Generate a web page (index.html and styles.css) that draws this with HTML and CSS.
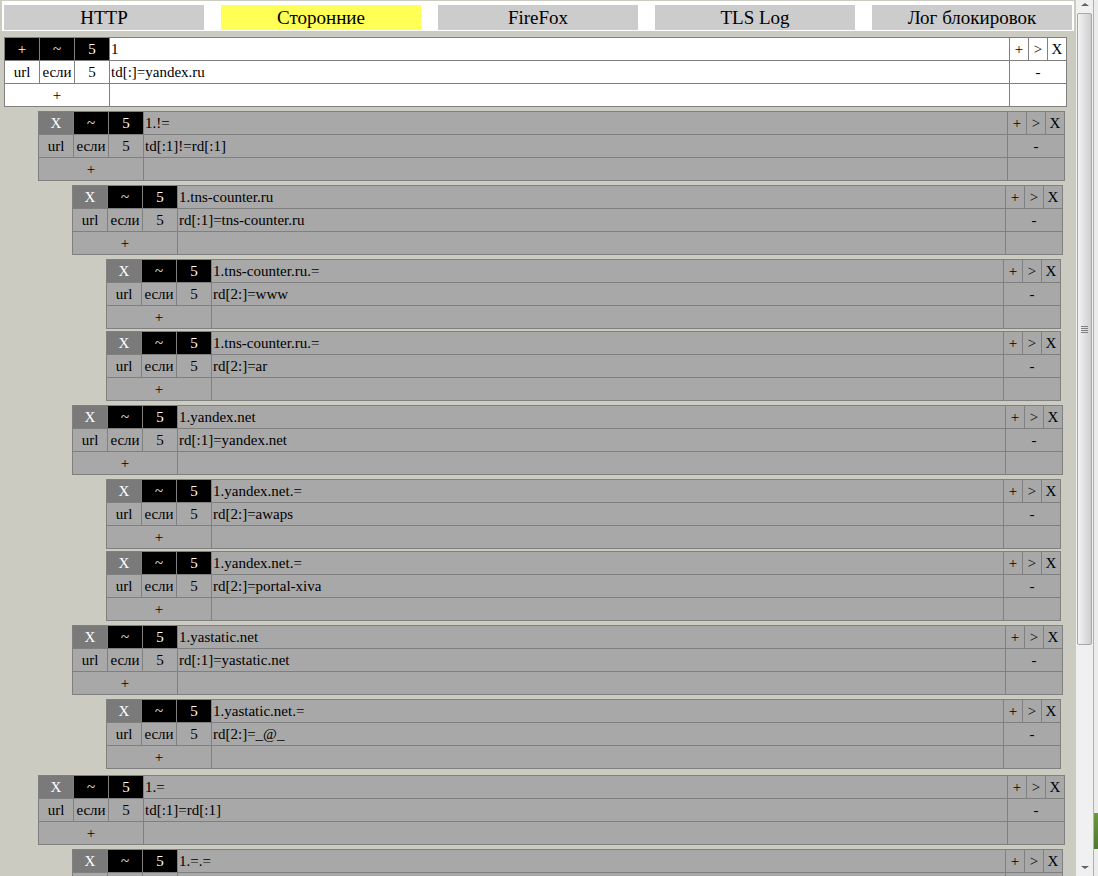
FILE: index.html
```html
<!DOCTYPE html>
<html lang="ru">
<head>
<meta charset="utf-8">
<title>Сторонние</title>
<link rel="stylesheet" href="styles.css">
</head>
<body>
<div class="page">
  <div class="tabs">
    <div class="tab">HTTP</div>
    <div class="tab active">Сторонние</div>
    <div class="tab">FireFox</div>
    <div class="tab">TLS Log</div>
    <div class="tab">Лог блокировок</div>
  </div>
  <div class="tree">
    <div class="node">
      <table class="blk white">
        <tr><td class="c k">+</td><td class="c k">~</td><td class="c k">5</td><td class="t">1</td><td class="r">+</td><td class="r">&gt;</td><td class="r">X</td></tr>
        <tr><td class="c">url</td><td class="c">если</td><td class="c">5</td><td class="t">td[:]=yandex.ru</td><td colspan="3">-</td></tr>
        <tr><td colspan="3">+</td><td class="t"></td><td colspan="3"></td></tr>
      </table>
      <div class="children">
        <div class="node">
          <table class="blk">
            <tr><td class="c x">X</td><td class="c k">~</td><td class="c k">5</td><td class="t">1.!=</td><td class="r">+</td><td class="r">&gt;</td><td class="r">X</td></tr>
            <tr><td class="c">url</td><td class="c">если</td><td class="c">5</td><td class="t">td[:1]!=rd[:1]</td><td colspan="3">-</td></tr>
            <tr><td colspan="3">+</td><td class="t"></td><td colspan="3"></td></tr>
          </table>
          <div class="children">
            <div class="node">
              <table class="blk">
                <tr><td class="c x">X</td><td class="c k">~</td><td class="c k">5</td><td class="t">1.tns-counter.ru</td><td class="r">+</td><td class="r">&gt;</td><td class="r">X</td></tr>
                <tr><td class="c">url</td><td class="c">если</td><td class="c">5</td><td class="t">rd[:1]=tns-counter.ru</td><td colspan="3">-</td></tr>
                <tr><td colspan="3">+</td><td class="t"></td><td colspan="3"></td></tr>
              </table>
              <div class="children">
                <div class="node">
                  <table class="blk">
                    <tr><td class="c x">X</td><td class="c k">~</td><td class="c k">5</td><td class="t">1.tns-counter.ru.=</td><td class="r">+</td><td class="r">&gt;</td><td class="r">X</td></tr>
                    <tr><td class="c">url</td><td class="c">если</td><td class="c">5</td><td class="t">rd[2:]=www</td><td colspan="3">-</td></tr>
                    <tr><td colspan="3">+</td><td class="t"></td><td colspan="3"></td></tr>
                  </table>
                </div>
                <div class="node">
                  <table class="blk">
                    <tr><td class="c x">X</td><td class="c k">~</td><td class="c k">5</td><td class="t">1.tns-counter.ru.=</td><td class="r">+</td><td class="r">&gt;</td><td class="r">X</td></tr>
                    <tr><td class="c">url</td><td class="c">если</td><td class="c">5</td><td class="t">rd[2:]=ar</td><td colspan="3">-</td></tr>
                    <tr><td colspan="3">+</td><td class="t"></td><td colspan="3"></td></tr>
                  </table>
                </div>
              </div>
            </div>
            <div class="node">
              <table class="blk">
                <tr><td class="c x">X</td><td class="c k">~</td><td class="c k">5</td><td class="t">1.yandex.net</td><td class="r">+</td><td class="r">&gt;</td><td class="r">X</td></tr>
                <tr><td class="c">url</td><td class="c">если</td><td class="c">5</td><td class="t">rd[:1]=yandex.net</td><td colspan="3">-</td></tr>
                <tr><td colspan="3">+</td><td class="t"></td><td colspan="3"></td></tr>
              </table>
              <div class="children">
                <div class="node">
                  <table class="blk">
                    <tr><td class="c x">X</td><td class="c k">~</td><td class="c k">5</td><td class="t">1.yandex.net.=</td><td class="r">+</td><td class="r">&gt;</td><td class="r">X</td></tr>
                    <tr><td class="c">url</td><td class="c">если</td><td class="c">5</td><td class="t">rd[2:]=awaps</td><td colspan="3">-</td></tr>
                    <tr><td colspan="3">+</td><td class="t"></td><td colspan="3"></td></tr>
                  </table>
                </div>
                <div class="node">
                  <table class="blk">
                    <tr><td class="c x">X</td><td class="c k">~</td><td class="c k">5</td><td class="t">1.yandex.net.=</td><td class="r">+</td><td class="r">&gt;</td><td class="r">X</td></tr>
                    <tr><td class="c">url</td><td class="c">если</td><td class="c">5</td><td class="t">rd[2:]=portal-xiva</td><td colspan="3">-</td></tr>
                    <tr><td colspan="3">+</td><td class="t"></td><td colspan="3"></td></tr>
                  </table>
                </div>
              </div>
            </div>
            <div class="node">
              <table class="blk">
                <tr><td class="c x">X</td><td class="c k">~</td><td class="c k">5</td><td class="t">1.yastatic.net</td><td class="r">+</td><td class="r">&gt;</td><td class="r">X</td></tr>
                <tr><td class="c">url</td><td class="c">если</td><td class="c">5</td><td class="t">rd[:1]=yastatic.net</td><td colspan="3">-</td></tr>
                <tr><td colspan="3">+</td><td class="t"></td><td colspan="3"></td></tr>
              </table>
              <div class="children">
                <div class="node">
                  <table class="blk">
                    <tr><td class="c x">X</td><td class="c k">~</td><td class="c k">5</td><td class="t">1.yastatic.net.=</td><td class="r">+</td><td class="r">&gt;</td><td class="r">X</td></tr>
                    <tr><td class="c">url</td><td class="c">если</td><td class="c">5</td><td class="t">rd[2:]=_@_</td><td colspan="3">-</td></tr>
                    <tr><td colspan="3">+</td><td class="t"></td><td colspan="3"></td></tr>
                  </table>
                </div>
              </div>
            </div>
          </div>
        </div>
        <div class="node">
          <table class="blk">
            <tr><td class="c x">X</td><td class="c k">~</td><td class="c k">5</td><td class="t">1.=</td><td class="r">+</td><td class="r">&gt;</td><td class="r">X</td></tr>
            <tr><td class="c">url</td><td class="c">если</td><td class="c">5</td><td class="t">td[:1]=rd[:1]</td><td colspan="3">-</td></tr>
            <tr><td colspan="3">+</td><td class="t"></td><td colspan="3"></td></tr>
          </table>
          <div class="children">
            <div class="node">
              <table class="blk">
                <tr><td class="c x">X</td><td class="c k">~</td><td class="c k">5</td><td class="t">1.=.=</td><td class="r">+</td><td class="r">&gt;</td><td class="r">X</td></tr>
                <tr><td class="c">url</td><td class="c">если</td><td class="c">5</td><td class="t">rd[2:]=rd[2:]</td><td colspan="3">-</td></tr>
                <tr><td colspan="3">+</td><td class="t"></td><td colspan="3"></td></tr>
              </table>
            </div>
          </div>
        </div>
      </div>
    </div>
  </div>
</div>
<div class="vscroll">
  <div class="sb-btn"><span class="tri-up"></span></div>
  <div class="sb-thumb"><span class="grip"></span></div>
  <div class="sb-track"></div>
  <div class="sb-btn bottom"><span class="tri-down"></span></div>
</div>
<div class="edge">
  <div class="edge-green"></div>
</div>
</body>
</html>
```
FILE: styles.css
```css
html, body {
  margin: 0;
  height: 100%;
  overflow: hidden;
}
body {
  display: flex;
  background: #cbcbc1;
  font-family: "Liberation Serif", "Times New Roman", serif;
  color: #000;
}
.page {
  flex: 0 0 1076px;
  width: 1076px;
  height: 876px;
  overflow: hidden;
}
.tabs {
  display: flex;
  gap: 17px;
  margin: 1px 2px 0;
  padding: 4px 2px 1px;
  background: #fff;
}
.tab {
  width: 200px;
  height: 25px;
  line-height: 25px;
  background: #cccccc;
  text-align: center;
  font-size: 19px;
}
.tab.active {
  background: #ffff55;
}
.tree {
  margin: 6px 9px 0 4px;
}
.node {
  margin-top: 2px;
}
.children {
  margin: 0 2px 0 34px;
  padding: 2px 0;
}
table.blk {
  width: 100%;
  border-collapse: separate;
  border-spacing: 0;
  table-layout: fixed;
  border-top: 1px solid #808080;
  border-left: 1px solid #808080;
  background: #a8a8a8;
  font-size: 15px;
}
table.blk.white {
  background: #fff;
}
.blk td {
  border-right: 1px solid #808080;
  border-bottom: 1px solid #808080;
  height: 22px;
  line-height: 22px;
  padding: 0;
  text-align: center;
  white-space: nowrap;
  overflow: hidden;
}
.blk td.c {
  width: 34px;
}
.blk td.r {
  width: 18px;
}
.blk td.t {
  text-align: left;
  padding-left: 1px;
}
.blk td.k {
  background: #000;
  color: #fff;
}
.blk td.x {
  background: #7a7a7a;
  color: #fff;
}
.vscroll {
  flex: 0 0 17px;
  width: 17px;
  height: 876px;
  display: flex;
  flex-direction: column;
  background: #f0f0f0;
}
.sb-btn {
  height: 13px;
  display: flex;
  justify-content: center;
  padding-top: 3px;
  box-sizing: border-box;
}
.sb-btn.bottom {
  height: 17px;
  padding-top: 7px;
}
.tri-up {
  width: 0;
  height: 0;
  border-left: 4px solid transparent;
  border-right: 4px solid transparent;
  border-bottom: 3px solid #606060;
}
.tri-down {
  width: 0;
  height: 0;
  border-left: 4px solid transparent;
  border-right: 4px solid transparent;
  border-top: 3px solid #606060;
}
.sb-thumb {
  height: 630px;
  margin: 0 1px;
  border: 1px solid #a8a8a8;
  border-radius: 2px;
  background: linear-gradient(to right, #f4f4f4, #dcdcdc 60%, #cfcfcf);
  display: flex;
  align-items: center;
  justify-content: center;
}
.grip {
  width: 7px;
  height: 7px;
  background: repeating-linear-gradient(to bottom, #808080 0 1px, transparent 1px 2px);
}
.sb-track {
  flex: 1;
}
.edge {
  flex: 1;
  background: #ececec;
  border-left: 1px solid #b0b0b0;
  display: flex;
  flex-direction: column;
}
.edge-green {
  margin-top: 813px;
  height: 36px;
  background: linear-gradient(to bottom, #6f9640, #4c7a2e);
}
```
